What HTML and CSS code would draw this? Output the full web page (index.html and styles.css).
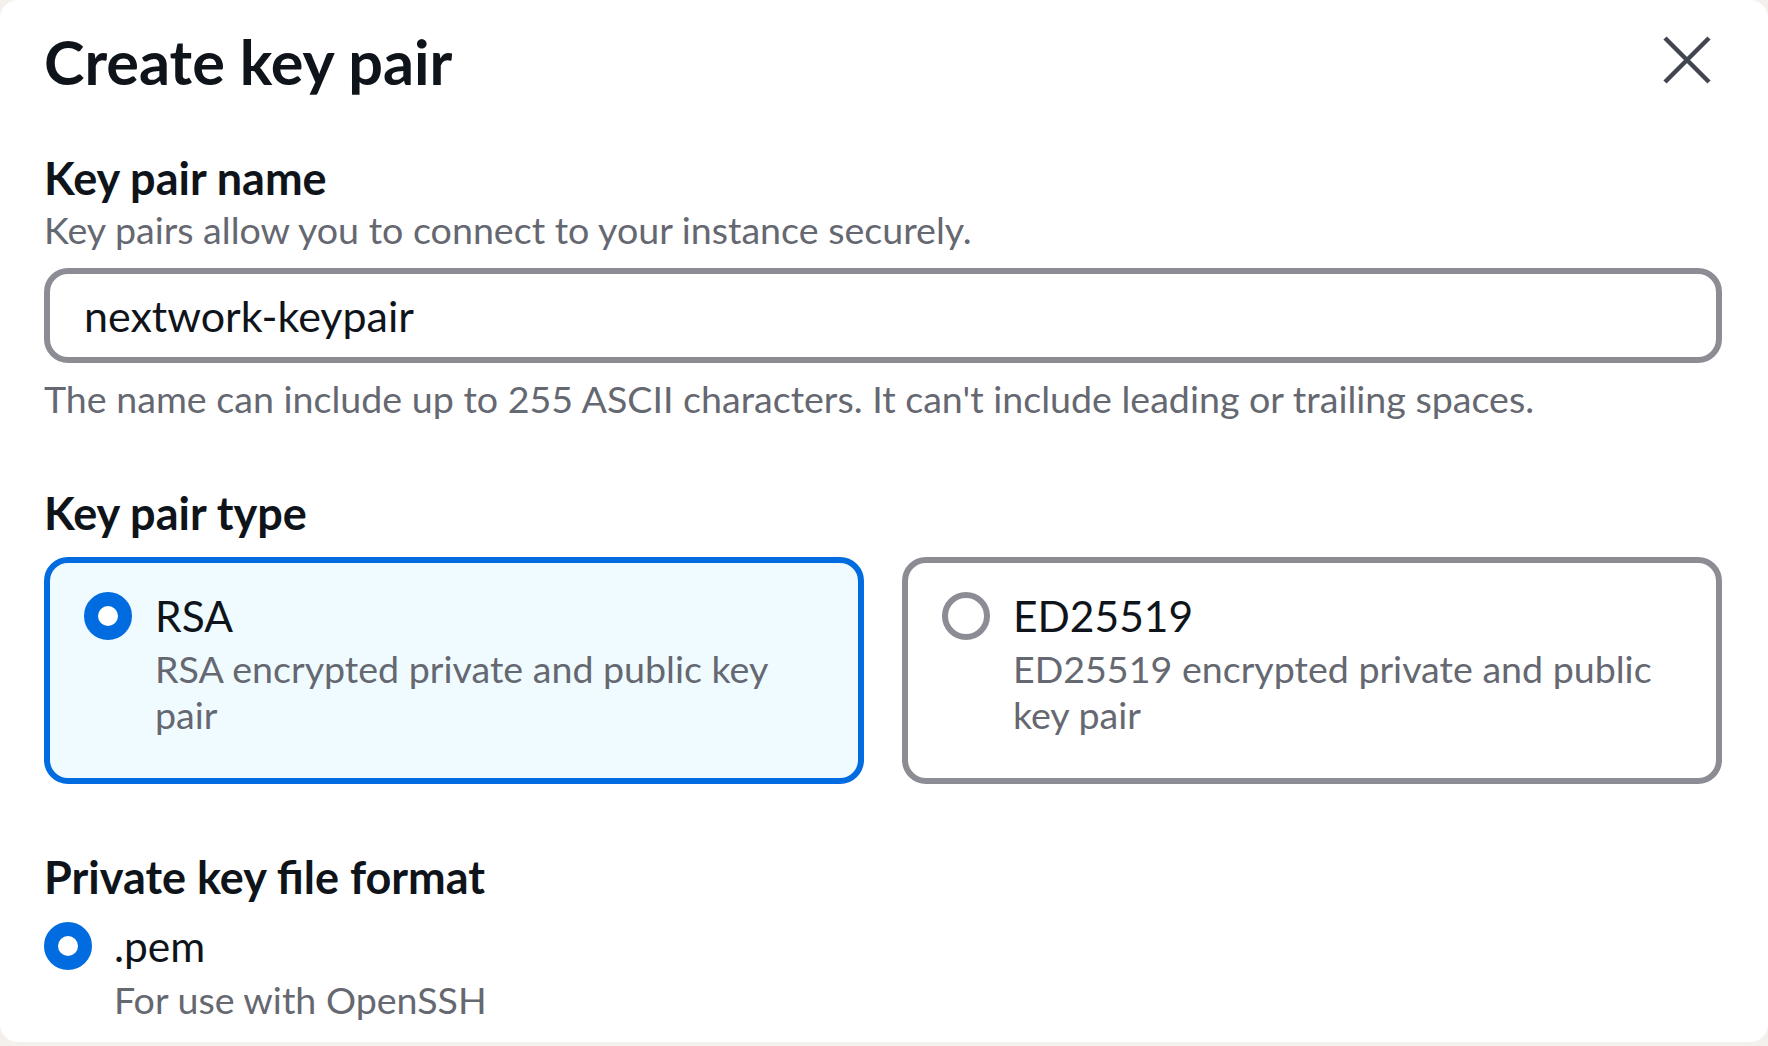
FILE: index.html
```html
<!DOCTYPE html>
<html lang="en">
<head>
<meta charset="utf-8">
<title>Create key pair</title>
<link rel="stylesheet" href="styles.css">
</head>
<body>
<div class="panel">
  <div class="header">
    <h2 class="title">Create key pair</h2>
    <button class="close" aria-label="Close">
      <svg viewBox="0 0 48 48" width="48" height="48"><path d="M2 2 L46 46 M46 2 L2 46" stroke="#424650" stroke-width="4.5" fill="none" stroke-linecap="butt"/></svg>
    </button>
  </div>

  <div class="field field-name">
    <div class="label">Key pair name</div>
    <div class="desc name-desc">Key pairs allow you to connect to your instance securely.</div>
    <div class="input">nextwork-keypair</div>
    <div class="desc constraint">The name can include up to 255 ASCII characters. It can't include leading or trailing spaces.</div>
  </div>

  <div class="field field-type">
    <div class="label">Key pair type</div>
    <div class="tiles">
      <div class="tile selected">
        <span class="radio checked"></span>
        <div class="tile-text">
          <div class="opt-label">RSA</div>
          <div class="desc opt-desc">RSA encrypted private and public key pair</div>
        </div>
      </div>
      <div class="tile">
        <span class="radio"></span>
        <div class="tile-text">
          <div class="opt-label">ED25519</div>
          <div class="desc opt-desc">ED25519 encrypted private and public key pair</div>
        </div>
      </div>
    </div>
  </div>

  <div class="field field-format">
    <div class="label">Private key file format</div>
    <div class="option">
      <span class="radio checked"></span>
      <div class="option-text">
        <div class="opt-label">.pem</div>
        <div class="desc opt-desc">For use with OpenSSH</div>
      </div>
    </div>
  </div>
</div>
</body>
</html>
```
FILE: styles.css
```css
html, body {
  margin: 0;
  padding: 0;
}
body {
  background: #f4f1ec;
  font-family: Lato, "Open Sans", sans-serif;
  color: #0f141a;
}
.panel {
  box-sizing: border-box;
  height: 1042px;
  background: #ffffff;
  border-radius: 18px;
  padding: 26px 46px 0 44px;
}
.header {
  display: flex;
  justify-content: space-between;
  align-items: flex-start;
}
.title {
  margin: 0;
  font-size: 61.2px;
  line-height: 72px;
  font-weight: 700;
  color: #0f141a;
}
.close {
  width: 48px;
  height: 48px;
  margin: 10px 11px 0 0;
  padding: 0;
  border: 0;
  background: transparent;
  display: block;
}
.close svg { display: block; }

.label {
  font-size: 45px;
  line-height: 50px;
  font-weight: 700;
  color: #0f141a;
}
.desc {
  font-size: 37.6px;
  line-height: 46px;
  color: #656871;
}
.field-name { margin-top: 55px; }
.name-desc { margin-top: 4px; }
.input {
  box-sizing: border-box;
  margin-top: 15px;
  height: 95px;
  border: 6px solid #8c8c94;
  border-radius: 24px;
  display: flex;
  align-items: center;
  padding: 0 0 0 34px;
  font-size: 43px;
  line-height: 52px;
  color: #0f141a;
}
.constraint { margin-top: 13px; }

.field-type { margin-top: 66px; }
.tiles {
  margin-top: 19px;
  display: grid;
  grid-template-columns: 1fr 1fr;
  column-gap: 38px;
}
.tile {
  box-sizing: border-box;
  border: 6px solid #8c8c94;
  border-radius: 24px;
  background: #ffffff;
  padding: 28px 34px 40px 34px;
  display: flex;
  align-items: flex-start;
}
.tile.selected {
  border-color: #006ce0;
  background: #f0fbff;
}
.radio {
  box-sizing: border-box;
  flex: none;
  width: 48px;
  height: 48px;
  margin-top: 1px;
  border-radius: 50%;
  border: 6px solid #8c8c94;
  background: #ffffff;
}
.radio.checked {
  border: 14px solid #006ce0;
}
.tile-text {
  margin-left: 23px;
  min-width: 0;
}
.opt-label {
  font-size: 42.5px;
  line-height: 50px;
  color: #0f141a;
}
.opt-desc { margin-top: 5px; }

.field-format { margin-top: 68px; }
.option {
  margin-top: 19px;
  display: flex;
  align-items: flex-start;
}
.option-text { margin-left: 22px; }
.option .opt-desc { margin-top: 6px; }
```
